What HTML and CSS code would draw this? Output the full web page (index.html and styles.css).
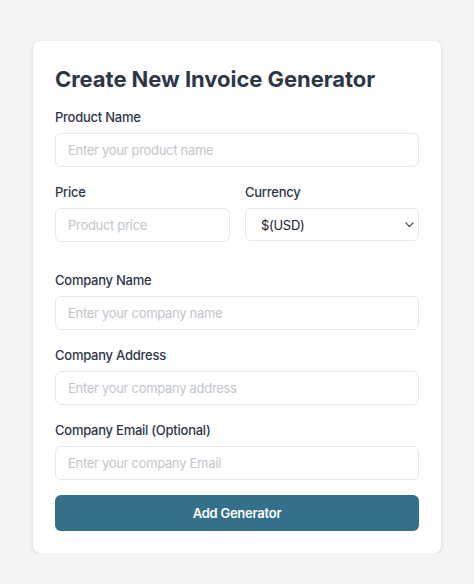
FILE: index.html
```html
<!DOCTYPE html>
<html>
<head>
<meta charset="utf-8">
<link rel="stylesheet" href="styles.css">
</head>
<body>
<div class="card">
  <h1 class="title">Create New Invoice Generator</h1>
  <div class="field">
    <label class="label">Product Name</label>
    <input class="input" type="text" placeholder="Enter your product name">
  </div>
  <div class="row">
    <div class="field">
      <label class="label">Price</label>
      <input class="input" type="text" placeholder="Product price">
    </div>
    <div class="field">
      <label class="label">Currency</label>
      <div class="select-wrap">
        <select class="select"><option>$(USD)</option></select>
        <svg class="chev" width="9" height="6" viewBox="0 0 9 6"><path d="M1 1l3.5 3.5L8 1" fill="none" stroke="#4a5568" stroke-width="1.2" stroke-linecap="round" stroke-linejoin="round"/></svg>
      </div>
    </div>
  </div>
  <div class="field">
    <label class="label">Company Name</label>
    <input class="input" type="text" placeholder="Enter your company name">
  </div>
  <div class="field">
    <label class="label">Company Address</label>
    <input class="input" type="text" placeholder="Enter your company address">
  </div>
  <div class="field">
    <label class="label">Company Email (Optional)</label>
    <input class="input" type="text" placeholder="Enter your company Email">
  </div>
  <button class="btn">Add Generator</button>
</div>
</body>
</html>
```
FILE: styles.css
```css
* { box-sizing: border-box; }
html, body { margin: 0; padding: 0; }
body {
  background: #f3f4f6;
  font-family: Inter, "Noto Sans", sans-serif;
  color: #2d3748;
}
.card {
  width: 408px;
  margin: 41px auto 0;
  background: #ffffff;
  border-radius: 7px;
  box-shadow: 0 1px 4px rgba(0,0,0,0.10), 0 1px 2px rgba(0,0,0,0.05);
  padding: 24px 22px 22px;
  display: flex;
  flex-direction: column;
}
.title {
  margin: 0 0 14px;
  font-size: 22px;
  line-height: 28px;
  font-weight: 700;
  color: #2d3748;
  letter-spacing: -0.05px;
}
.field {
  display: flex;
  flex-direction: column;
  margin-bottom: 15px;
}
.label {
  font-size: 13px;
  line-height: 20px;
  font-weight: 500;
  color: #2d3748;
  margin-bottom: 6px;
  letter-spacing: -0.25px;
}
.input, .select {
  height: 34px;
  width: 100%;
  border: 1px solid #e4e7ec;
  border-radius: 6px;
  padding: 0 12px;
  font-family: inherit;
  font-size: 13px;
  letter-spacing: -0.3px;
  color: #1a202c;
  background: #fff;
  outline: none;
}
.input::placeholder { color: #c2c6cc; }
.row {
  display: grid;
  grid-template-columns: 175px 174px;
  column-gap: 15px;
  margin-bottom: 13px;
}
.row .field { margin-bottom: 15px; }
.select-wrap { position: relative; }
.select {
  appearance: none;
  -webkit-appearance: none;
  padding-left: 15px;
  height: 33px;
}
.chev {
  position: absolute;
  right: 5px;
  top: 14px;
  pointer-events: none;
}
.btn {
  height: 36px;
  border: none;
  border-radius: 6px;
  background: #347089;
  color: #ffffff;
  font-family: inherit;
  font-size: 13px;
  letter-spacing: -0.25px;
  font-weight: 600;
}
```
